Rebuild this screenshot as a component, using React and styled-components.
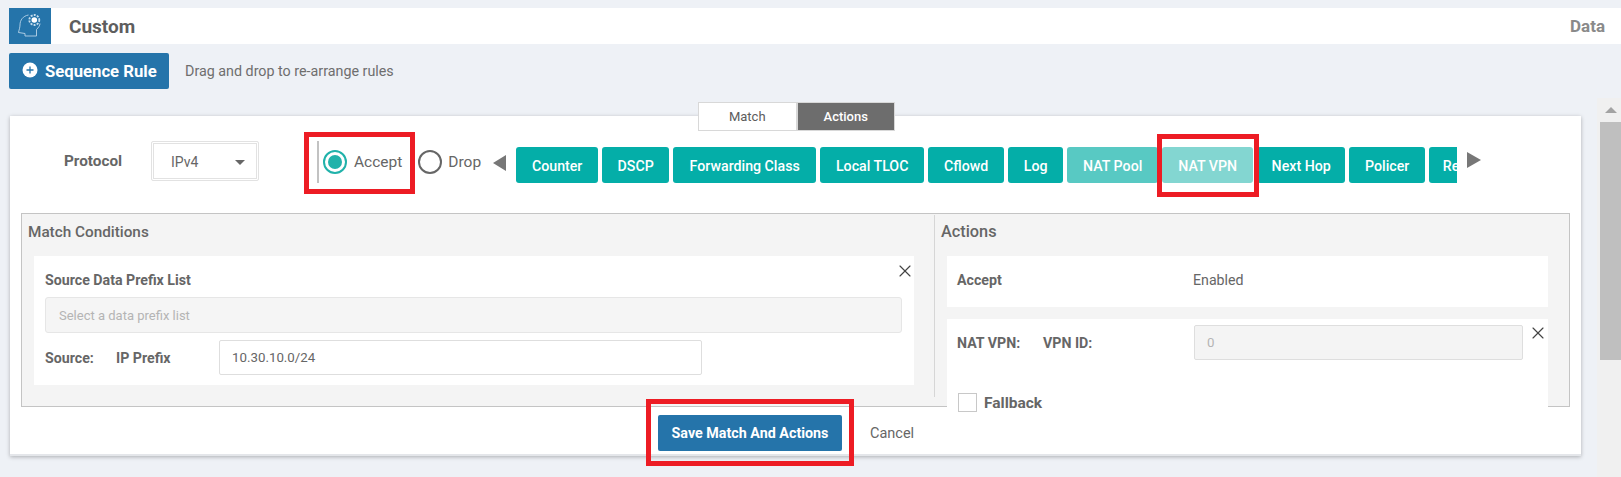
import React from 'react';
import styled, { createGlobalStyle } from 'styled-components';
import { X } from 'lucide-react';

const GlobalStyle = createGlobalStyle`
  html, body { margin: 0; padding: 0; background: #eef1f6; }
  body { font-family: Roboto, "Liberation Sans", sans-serif; color: #666; overflow: hidden; }
  * { box-sizing: border-box; }
`;

const Page = styled.div`
  height: 477px;
  padding-top: 8px;
  overflow: hidden;
`;

const Header = styled.header`
  display: flex;
  align-items: center;
  height: 36px;
  margin-left: 9px;
  padding-right: 16px;
  background: #fff;
`;

const HeaderIcon = styled.div`
  width: 42px;
  height: 36px;
  background: #2574aa;
`;

const HeaderTitle = styled.h1`
  flex: 1;
  margin: 0 0 0 18px;
  font-size: 19px;
  font-weight: 700;
  color: #5e5e5e;
`;

const HeaderSide = styled.span`
  font-size: 17px;
  font-weight: 700;
  color: #8a8a8a;
`;

const Toolbar = styled.div`
  display: flex;
  align-items: center;
  gap: 16px;
  margin: 9px 0 0 9px;
`;

const AddButton = styled.button`
  display: flex;
  align-items: center;
  gap: 7px;
  width: 160px;
  height: 36px;
  padding: 0 0 0 13px;
  border: 0;
  border-radius: 2px;
  background: #2574aa;
  color: #fff;
  font: 700 16.7px Roboto, sans-serif;
`;

const Hint = styled.span`
  font-size: 14.3px;
  color: #6e6e6e;
`;

const Workspace = styled.div`
  display: flex;
  margin-top: 9px;
`;

const Main = styled.main`
  width: 1597px;
  padding: 4px 16px 0 10px;
`;

const Tabs = styled.div`
  position: relative;
  z-index: 1;
  display: flex;
  width: 197px;
  height: 29px;
  margin: 0 0 -15px 688px;
`;

const Tab = styled.div`
  display: flex;
  align-items: center;
  justify-content: center;
  flex: 1;
  border: 1px solid #d8d8d8;
  background: ${p => (p.$active ? '#6d6d6d' : '#fff')};
  color: ${p => (p.$active ? '#fff' : '#5c5c5c')};
  font-size: 13px;
  font-weight: ${p => (p.$active ? 500 : 400)};
`;

const Card = styled.section`
  position: relative;
  height: 340px;
  padding-top: 25px;
  background: #fff;
  border-bottom: 2px solid #e4e6ea;
  box-shadow: 0 1px 4px rgba(0, 0, 0, 0.28);
`;

const Controls = styled.div`
  display: flex;
  align-items: center;
  height: 42px;
`;

const FieldLabel = styled.span`
  width: 87px;
  margin: -2px 0 0 54px;
  font-size: 15.3px;
  font-weight: 700;
  color: #666;
`;

const Select = styled.div`
  display: flex;
  align-items: center;
  justify-content: space-between;
  width: 108px;
  height: 40px;
  margin: -2px 58px 0 0;
  padding: 2px 13px 0 19px;
  border: 1px solid #e2e2e2;
  border-radius: 2px;
  box-shadow: inset 0 0 0 1px #fff, inset 0 0 0 2px #e2e2e2;
  font-size: 14px;
  color: #666;
`;

const Caret = styled.span`
  width: 0;
  height: 0;
  border-left: 5px solid transparent;
  border-right: 5px solid transparent;
  border-top: 5px solid #666;
`;

const RadioGroup = styled.div`
  display: flex;
  align-items: center;
  height: 42px;
  padding-left: 4px;
  border-left: 2px solid #c2c2c2;
`;

const Radio = styled.span`
  display: flex;
  align-items: center;
  justify-content: center;
  width: 24px;
  height: 24px;
  margin-left: ${p => p.$offset || 0}px;
  border: 2px solid ${p => (p.$checked ? '#20b2aa' : '#666')};
  border-radius: 50%;
  &::after {
    content: '';
    display: ${p => (p.$checked ? 'block' : 'none')};
    width: 14px;
    height: 14px;
    border-radius: 50%;
    background: #20b2aa;
  }
`;

const RadioText = styled.span`
  margin-left: ${p => p.$gap}px;
  font-size: 15.5px;
  color: #666;
`;

const Arrow = styled.span`
  flex: none;
  width: 0;
  height: 0;
  margin: ${p => (p.$dir === 'left' ? '2px 10px 0 12px' : '-4px 0 0 10px')};
  border-top: 8px solid transparent;
  border-bottom: 8px solid transparent;
  ${p => (p.$dir === 'left' ? 'border-right: 13px solid #777;' : 'border-left: 14px solid #777;')}
`;

const ActionStrip = styled.div`
  display: flex;
  gap: 4px;
  width: 941px;
  margin-top: 6px;
  overflow: hidden;
`;

const ActionButton = styled.button`
  flex: none;
  height: 36px;
  width: ${p => p.$width}px;
  padding: 2px 0 0;
  border: 0;
  border-radius: 3px;
  background: ${p => (p.$tone === 'used' ? '#58c9c3' : p.$tone === 'current' ? '#83d6d1' : '#04aea8')};
  color: #fff;
  font: 500 14.2px Roboto, sans-serif;
  white-space: nowrap;
`;

const Panel = styled.div`
  display: flex;
  height: 194px;
  margin: 30px 11px 0;
  border: 1px solid #c4c4c4;
  background: #f4f4f4;
`;

const MatchColumn = styled.div`
  width: 912px;
  padding: 0 20px 0 6px;
`;

const Divider = styled.div`
  width: 1px;
  height: 182px;
  margin-top: 1px;
  background: #d6d6d6;
`;

const ActionsColumn = styled.div`
  flex: 1;
  padding: 0 21px 0 6px;
`;

const SectionTitle = styled.h2`
  height: 42px;
  margin: 0;
  font-size: ${p => p.$size}px;
  font-weight: 500;
  line-height: 36px;
  color: #666;
`;

const MatchCard = styled.div`
  position: relative;
  height: 129px;
  margin-left: 6px;
  padding: 14px 12px 0 11px;
  background: #fff;
`;

const ActionCard = styled.div`
  position: relative;
  height: ${p => p.$height}px;
  margin: 0 0 12px 6px;
  padding: 0 10px;
  background: #fff;
`;

const BoldLabel = styled.span`
  display: inline-block;
  width: ${p => (p.$width ? `${p.$width}px` : 'auto')};
  font-size: 14.2px;
  font-weight: 700;
  color: #666;
`;

const PrefixSelect = styled.input`
  display: block;
  width: 857px;
  height: 36px;
  margin-top: 8px;
  padding: 0 13px;
  border: 1px solid #e6e6e6;
  border-radius: 3px;
  background: #f5f5f5;
  font: 13px Roboto, sans-serif;
  &::placeholder { color: #b4b4b4; opacity: 1; }
`;

const SourceRow = styled.div`
  display: flex;
  align-items: center;
  margin-top: 7px;
`;

const TextInput = styled.input`
  width: ${p => p.$width}px;
  height: 35px;
  padding: 0 12px;
  border: 1px solid #dedede;
  border-radius: 2px;
  background: ${p => (p.disabled ? '#f4f4f4' : '#fff')};
  color: ${p => (p.disabled ? '#b4b4b4' : '#666')};
  font: 13.3px Roboto, sans-serif;
`;

const CloseIcon = styled(X)`
  position: absolute;
  top: ${p => p.$top}px;
  right: ${p => p.$right}px;
  color: #444;
`;

const AcceptRow = styled.div`
  display: flex;
  align-items: center;
  height: 100%;
  padding-bottom: 4px;
`;

const PlainValue = styled.span`
  font-size: 14.2px;
  color: #666;
`;

const NatRow = styled.div`
  display: flex;
  align-items: center;
  padding-top: 6px;
`;

const FallbackRow = styled.label`
  display: flex;
  align-items: center;
  gap: 7px;
  margin: 33px 0 0 1px;
  font-size: 15.5px;
  font-weight: 700;
  color: #666;
`;

const CheckBox = styled.span`
  width: 19px;
  height: 19px;
  border: 1px solid #c8c8c8;
  background: #fff;
`;

const Footer = styled.div`
  display: flex;
  align-items: center;
  margin: 8px 0 0 648px;
  gap: 28px;
`;

const SaveButton = styled.button`
  width: 184px;
  height: 36px;
  border: 0;
  border-radius: 2px;
  background: #2574aa;
  color: #fff;
  font: 700 14.3px Roboto, sans-serif;
`;

const CancelLink = styled.span`
  font-size: 14.5px;
  color: #666;
`;

// red callouts drawn on top of the screenshot
const Callout = styled.div`
  position: absolute;
  left: ${p => p.$left}px;
  top: ${p => p.$top}px;
  width: ${p => p.$width}px;
  height: ${p => p.$height}px;
  border: 5px solid #ed1c24;
  pointer-events: none;
`;

const Scrollbar = styled.div`
  width: 24px;
  height: 379px;
  padding-left: 3px;
  background: #f0f0f0;
`;

const ScrollUp = styled.div`
  display: flex;
  align-items: center;
  justify-content: center;
  height: 24px;
  &::after {
    content: '';
    border-left: 6px solid transparent;
    border-right: 6px solid transparent;
    border-bottom: 6px solid #a3a3a3;
  }
`;

const ScrollThumb = styled.div`
  height: 238px;
  background: #bfbfbf;
`;

const BrainIcon = () => (
  <svg width="42" height="36" viewBox="0 0 42 36" fill="none">
    <path
      d="M19.5 7C14 8 11 12 11 17c0 2.5-1 5-1.5 7.5L16 25.5V28h11.5v-6.5c2-2 3.5-4 3.5-6"
      stroke="#b9d4e8"
      strokeWidth="0.9"
    />
    <circle cx="25.3" cy="12" r="5" stroke="#c4dcec" strokeWidth="1.8" strokeDasharray="2 1.2" />
    <circle cx="25.3" cy="12" r="2.8" fill="#fff" />
  </svg>
);

const PlusIcon = () => (
  <svg width="16" height="16" viewBox="0 0 16 16" style={{ marginTop: -3 }}>
    <circle cx="8" cy="8" r="7.5" fill="#fff" />
    <path d="M8 4.5v7M4.5 8h7" stroke="#2574aa" strokeWidth="1.3" />
  </svg>
);

const actions = [
  { name: 'Counter', width: 82 },
  { name: 'DSCP', width: 67 },
  { name: 'Forwarding Class', width: 143 },
  { name: 'Local TLOC', width: 104 },
  { name: 'Cflowd', width: 76 },
  { name: 'Log', width: 55 },
  { name: 'NAT Pool', width: 91, tone: 'used' },
  { name: 'NAT VPN', width: 91, tone: 'current' },
  { name: 'Next Hop', width: 88 },
  { name: 'Policer', width: 76 },
  { name: 'Redirect', width: 80 },
];

const App = () => (
  <Page>
    <GlobalStyle />
    <Header>
      <HeaderIcon>
        <BrainIcon />
      </HeaderIcon>
      <HeaderTitle>Custom</HeaderTitle>
      <HeaderSide>Data</HeaderSide>
    </Header>

    <Toolbar>
      <AddButton>
        <PlusIcon />
        Sequence Rule
      </AddButton>
      <Hint>Drag and drop to re-arrange rules</Hint>
    </Toolbar>

    <Workspace>
      <Main>
        <Tabs>
          <Tab>Match</Tab>
          <Tab $active>Actions</Tab>
        </Tabs>
        <Card>
          <Controls>
            <FieldLabel>Protocol</FieldLabel>
            <Select>
              IPv4
              <Caret />
            </Select>
            <RadioGroup>
              <Radio $checked />
              <RadioText $gap={7}>Accept</RadioText>
              <Radio $offset={16} />
              <RadioText $gap={6}>Drop</RadioText>
            </RadioGroup>
            <Arrow $dir="left" />
            <ActionStrip>
              {actions.map(a => (
                <ActionButton key={a.name} $width={a.width} $tone={a.tone}>
                  {a.name}
                </ActionButton>
              ))}
            </ActionStrip>
            <Arrow $dir="right" />
          </Controls>

          <Panel>
            <MatchColumn>
              <SectionTitle $size={15.3}>Match Conditions</SectionTitle>
              <MatchCard>
                <BoldLabel>Source Data Prefix List</BoldLabel>
                <CloseIcon size={20} strokeWidth={1.4} $top={5} $right={-1} />
                <PrefixSelect placeholder="Select a data prefix list" disabled />
                <SourceRow>
                  <BoldLabel $width={71}>Source:</BoldLabel>
                  <BoldLabel $width={103}>IP Prefix</BoldLabel>
                  <TextInput $width={483} defaultValue="10.30.10.0/24" />
                </SourceRow>
              </MatchCard>
            </MatchColumn>
            <Divider />
            <ActionsColumn>
              <SectionTitle $size={16.3}>Actions</SectionTitle>
              <ActionCard $height={51}>
                <AcceptRow>
                  <BoldLabel $width={236}>Accept</BoldLabel>
                  <PlainValue>Enabled</PlainValue>
                </AcceptRow>
              </ActionCard>
              <ActionCard $height={96}>
                <NatRow>
                  <BoldLabel $width={86}>NAT VPN:</BoldLabel>
                  <BoldLabel $width={151}>VPN ID:</BoldLabel>
                  <TextInput $width={329} value="0" disabled />
                </NatRow>
                <CloseIcon size={20} strokeWidth={1.4} $top={4} $right={0} />
                <FallbackRow>
                  <CheckBox />
                  Fallback
                </FallbackRow>
              </ActionCard>
            </ActionsColumn>
          </Panel>

          <Footer>
            <SaveButton>Save Match And Actions</SaveButton>
            <CancelLink>Cancel</CancelLink>
          </Footer>

          <Callout $left={294} $top={16} $width={111} $height={62} />
          <Callout $left={1147} $top={18} $width={102} $height={63} />
          <Callout $left={636} $top={283} $width={208} $height={67} />
        </Card>
      </Main>
      <Scrollbar>
        <ScrollUp />
        <ScrollThumb />
      </Scrollbar>
    </Workspace>
  </Page>
);

export default App;
